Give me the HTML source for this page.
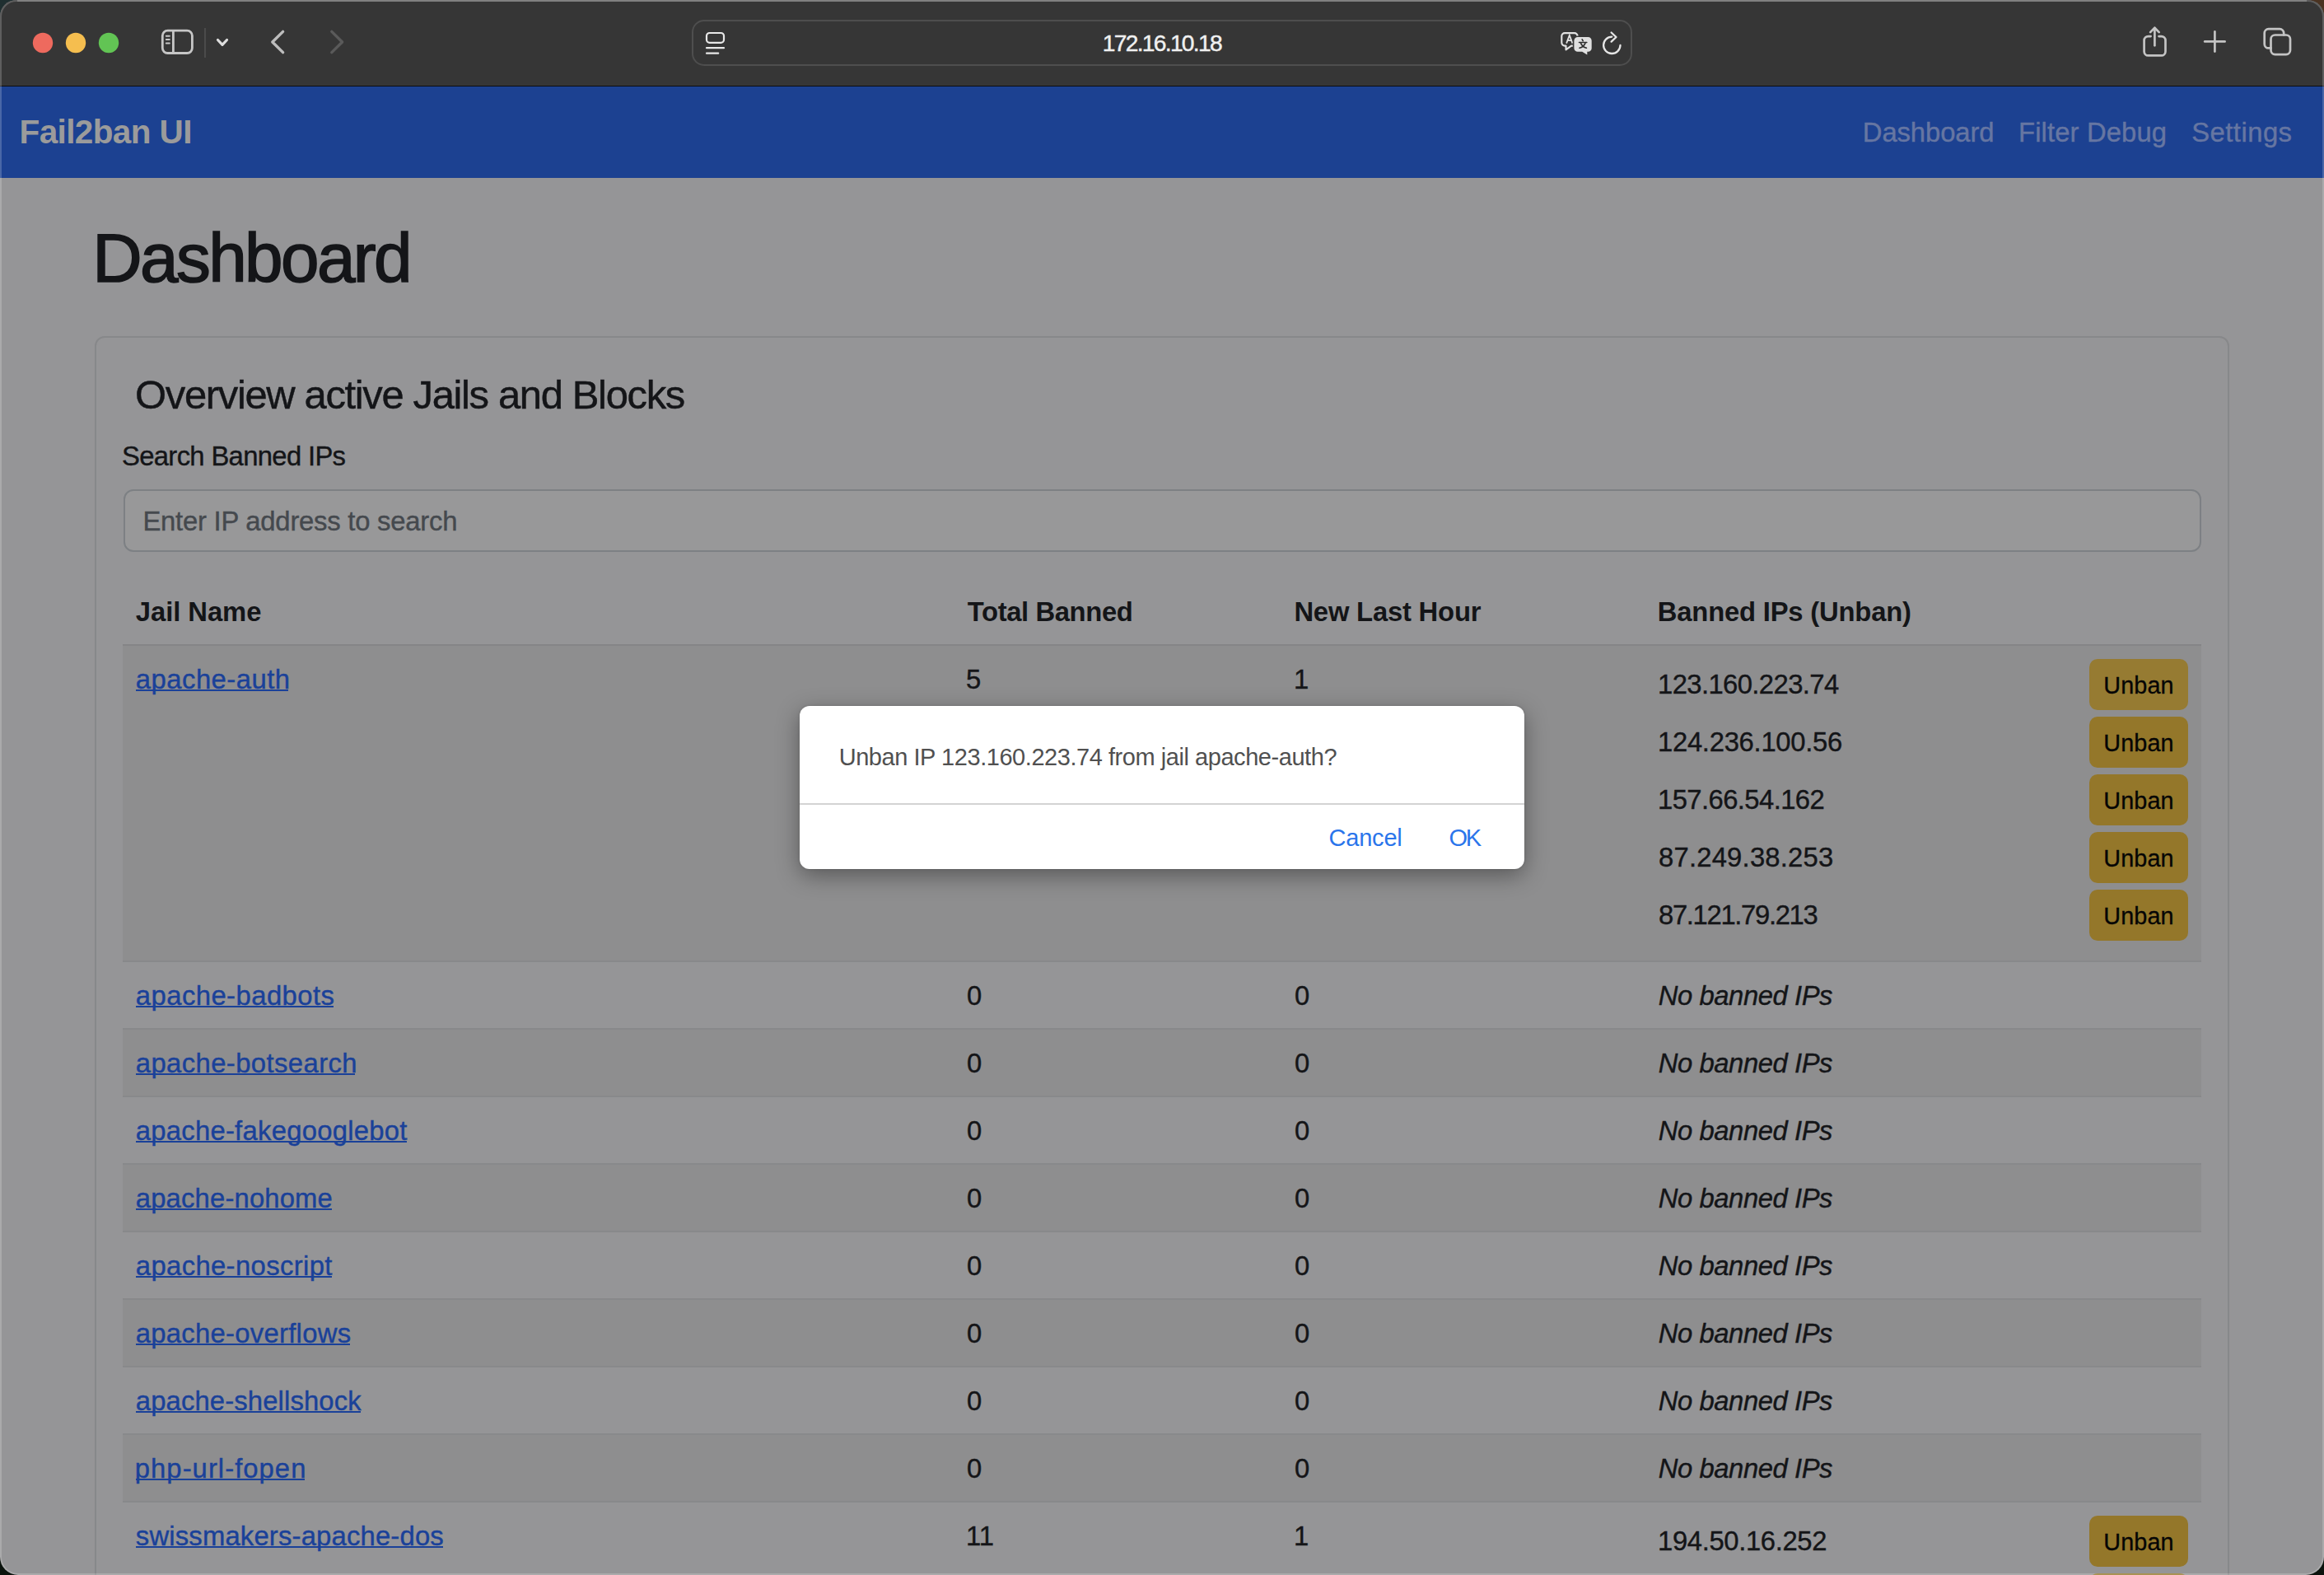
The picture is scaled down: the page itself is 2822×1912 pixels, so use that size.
<!DOCTYPE html>
<html><head><meta charset="utf-8"><title>Fail2ban UI</title>
<style>
html,body{margin:0;padding:0;width:2822px;height:1912px;overflow:hidden;background:#0c140e;font-family:'Liberation Sans',sans-serif}
#bgc{position:absolute;left:0;top:0;width:2822px;height:1912px;background:linear-gradient(180deg,#1f2f30 0px,#1f2f30 60px,#0b130d 1850px,#0b130d 1912px)}
#bgtr{position:absolute;left:2760px;top:0;width:62px;height:62px;background:#4a3322}
#win{position:absolute;left:0;top:0;width:2822px;height:1912px;border-radius:20px 20px 22px 22px;overflow:hidden;background:#959597}
#tb{position:absolute;left:0;top:0;width:2822px;height:104px;background:#363636}
#tbline{position:absolute;left:0;top:104px;width:2822px;height:1px;background:#0d0d0d}
#nav{position:absolute;left:0;top:105px;width:2822px;height:111px;background:#1c4191}
.abs{position:absolute}
.t{position:absolute;white-space:nowrap;font-family:'Liberation Sans',sans-serif}
.ul{position:absolute;height:2px}
#card{position:absolute;left:115px;top:408px;width:2588px;height:1700px;border:2px solid #87888a;border-radius:12px;box-sizing:content-box}
#inp{position:absolute;left:150px;top:594px;width:2519px;height:72px;border:2px solid #7d8084;border-radius:12px;background:#989899}
.row{position:absolute;left:149px;width:2524px}
.dk{background:#8e8e8f}
.bd{position:absolute;left:149px;width:2524px;height:2px;background:#88898b}
.btn{position:absolute;left:2537px;width:120px;height:62px;border-radius:10px;background:#94772a}
#dlg{position:absolute;left:971px;top:857px;width:880px;height:198px;background:#fff;border-radius:12px;box-shadow:0 8px 28px rgba(0,0,0,0.38),0 0 3px rgba(0,0,0,0.15)}
#dsep{position:absolute;left:971px;top:975px;width:880px;height:2px;background:#d3d3d3}
#frame{position:absolute;left:0;top:0;width:2822px;height:1912px;border-radius:20px 20px 22px 22px;box-shadow:inset 0 0 0 2px rgba(255,255,255,0.2);pointer-events:none}
#ftop{position:absolute;left:21px;top:0;width:2780px;height:2px;background:rgba(255,255,255,0.22)}
</style></head>
<body>
<div id="bgc"></div><div id="bgtr"></div>
<div id="win">
  <div id="tb"></div>
  <div id="tbline"></div>
  <svg class="abs" style="left:0;top:0" width="2822" height="104" viewBox="0 0 2822 104">
    <circle cx="52" cy="52" r="12.2" fill="#ee6a5e"/>
    <circle cx="92" cy="52" r="12.2" fill="#f5be4f"/>
    <circle cx="132" cy="52" r="12.2" fill="#62c454"/>
    <g fill="none" stroke="#c6c6c6" stroke-width="2.8" stroke-linecap="round" stroke-linejoin="round">
      <rect x="197.3" y="37.1" width="36.1" height="27.4" rx="6.2"/>
      <line x1="210.4" y1="37.5" x2="210.4" y2="64.5"/>
    </g>
    <g stroke="#c6c6c6" stroke-width="2" stroke-linecap="round">
      <line x1="201.8" y1="43.8" x2="205.8" y2="43.8"/>
      <line x1="201.8" y1="48.1" x2="205.8" y2="48.1"/>
      <line x1="201.8" y1="52.4" x2="205.8" y2="52.4"/>
    </g>
    <rect x="248" y="34" width="2" height="36" fill="#4b4b4b"/>
    <polyline points="264.5,48.5 270,54.3 275.5,48.5" fill="none" stroke="#dedede" stroke-width="3.2" stroke-linecap="round" stroke-linejoin="round"/>
    <polyline points="343.6,38.4 330.8,51 343.6,63.6" fill="none" stroke="#bdbdbd" stroke-width="3.4" stroke-linecap="round" stroke-linejoin="round"/>
    <polyline points="402.8,38.4 415.6,51 402.8,63.6" fill="none" stroke="#5a5a5a" stroke-width="3.4" stroke-linecap="round" stroke-linejoin="round"/>
    <rect x="841" y="25" width="1140" height="54" rx="14" fill="#363636" stroke="#4e4e4e" stroke-width="2"/>
    <g fill="none" stroke="#e8e8e8" stroke-width="2.2" stroke-linecap="round">
      <rect x="858" y="40" width="21" height="11.8" rx="3.6"/>
      <line x1="858" y1="58.2" x2="879" y2="58.2"/>
      <line x1="858" y1="64.7" x2="872.2" y2="64.7"/>
    </g>
    <!-- translate -->
    <g>
      <path d="M1900.1,40.1 H1911.8 A3.8,3.8 0 0 1 1915.6,43.9 V51.8 A3.8,3.8 0 0 1 1911.8,55.6 H1908 L1901.5,60.4 V55.6 H1900.1 A3.8,3.8 0 0 1 1896.3,51.8 V43.9 A3.8,3.8 0 0 1 1900.1,40.1 Z" fill="none" stroke="#e2e2e2" stroke-width="2.1" stroke-linejoin="round"/>
      <path d="M1902.1,52.6 L1905.8,42.9 L1909.5,52.6 M1903.3,49.2 H1908.3" fill="none" stroke="#e2e2e2" stroke-width="1.8"/>
      <path d="M1915.7,45.1 H1928.4 A4.3,4.3 0 0 1 1932.7,49.4 V58.4 A4.3,4.3 0 0 1 1928.4,62.7 H1927.3 V66.6 L1921.2,62.7 H1915.7 A4.3,4.3 0 0 1 1911.4,58.4 V49.4 A4.3,4.3 0 0 1 1915.7,45.1 Z" fill="#363636" stroke="#363636" stroke-width="3.2" stroke-linejoin="round"/>
      <path d="M1915.7,45.1 H1928.4 A4.3,4.3 0 0 1 1932.7,49.4 V58.4 A4.3,4.3 0 0 1 1928.4,62.7 H1927.3 V66.6 L1921.2,62.7 H1915.7 A4.3,4.3 0 0 1 1911.4,58.4 V49.4 A4.3,4.3 0 0 1 1915.7,45.1 Z" fill="#e0e0e0"/>
      <path d="M1921.2,47.8 L1922.2,49.6 M1917.5,51.5 H1926.8 M1919.6,52.6 Q1921.6,57 1926.4,58.3 M1924.9,52.6 Q1922.9,57 1918,58.3" fill="none" stroke="#2e2e2e" stroke-width="1.6" stroke-linecap="round"/>
    </g>
    <!-- reload -->
    <path d="M1967.5,55.0 A10.2,10.2 0 1 1 1957.3,44.6" fill="none" stroke="#e6e6e6" stroke-width="2.3" stroke-linecap="round"/>
    <polyline points="1956.6,39.5 1962.5,45.0 1956.6,50.6" fill="none" stroke="#e6e6e6" stroke-width="2.3" stroke-linecap="round" stroke-linejoin="round"/>
    <!-- share -->
    <g fill="none" stroke="#c4c4c4" stroke-width="2.7" stroke-linecap="round" stroke-linejoin="round">
      <path d="M2611.6,44.1 h-3 a5,5 0 0 0 -5,5 v13.3 a5,5 0 0 0 5,5 h15.9 a5,5 0 0 0 5,-5 v-13.3 a5,5 0 0 0 -5,-5 h-3"/>
      <line x1="2616.4" y1="34" x2="2616.4" y2="55.3"/>
      <polyline points="2611.1,39.1 2616.4,33.8 2621.7,39.1"/>
      <line x1="2677.2" y1="50.4" x2="2701.6" y2="50.4"/>
      <line x1="2689.4" y1="38.4" x2="2689.4" y2="62.6"/>
      <path d="M2757.5,58.4 h-2.8 a5,5 0 0 1 -5,-5 v-13.2 a5,5 0 0 1 5,-5 h13.5 a5,5 0 0 1 5,5 v2.3"/>
      <rect x="2757.5" y="42.5" width="23.5" height="23.6" rx="5"/>
    </g>
  </svg>
  <div id="nav"></div>
  <div id="card"></div>
  <div id="inp"></div>
  <div class="bd" style="top:782px;background:#858587"></div>
  <div class="row dk" style="top:784px;height:382px"></div>
  <div class="bd" style="top:1166px"></div>
  <div class="bd" style="top:1248px"></div>
  <div class="row dk" style="top:1250px;height:80px"></div>
  <div class="bd" style="top:1330px"></div>
  <div class="bd" style="top:1412px"></div>
  <div class="row dk" style="top:1414px;height:80px"></div>
  <div class="bd" style="top:1494px"></div>
  <div class="bd" style="top:1576px"></div>
  <div class="row dk" style="top:1578px;height:80px"></div>
  <div class="bd" style="top:1658px"></div>
  <div class="bd" style="top:1740px"></div>
  <div class="row dk" style="top:1742px;height:80px"></div>
  <div class="bd" style="top:1822px"></div>
  <div class="btn" style="top:800px;background:#967b32"></div>
  <div class="btn" style="top:870px"></div>
  <div class="btn" style="top:940px"></div>
  <div class="btn" style="top:1010px"></div>
  <div class="btn" style="top:1080px"></div>
  <div class="btn" style="top:1840px"></div>
  <div class="btn" style="top:1910px"></div>
  <div id="dlg"></div>
  <div id="dsep"></div>
<span class="t" style="left:1338.80px;top:38.12px;font-size:28.2px;line-height:28.2px;color:#f0f0f0;letter-spacing:-1.709px;-webkit-text-stroke:0.45px #f0f0f0">172.16.10.18</span>
<span class="t" style="left:23.50px;top:139.91px;font-size:40.5px;line-height:40.5px;color:#9b9b9b;letter-spacing:-0.610px;font-weight:bold">Fail2ban UI</span>
<span class="t" style="left:2261.80px;top:145.33px;font-size:32.8px;line-height:32.8px;color:#6676a2;letter-spacing:-0.088px;-webkit-text-stroke:0.4px #6676a2">Dashboard</span>
<span class="t" style="left:2451.00px;top:145.33px;font-size:32.8px;line-height:32.8px;color:#6676a2;letter-spacing:0.127px;-webkit-text-stroke:0.4px #6676a2">Filter Debug</span>
<span class="t" style="left:2661.20px;top:145.33px;font-size:32.8px;line-height:32.8px;color:#6676a2;letter-spacing:0.471px;-webkit-text-stroke:0.4px #6676a2">Settings</span>
<span class="t" style="left:112.30px;top:271.93px;font-size:83.7px;line-height:83.7px;color:#141518;letter-spacing:-2.638px;-webkit-text-stroke:1.6px #141518">Dashboard</span>
<span class="t" style="left:164.10px;top:454.51px;font-size:49px;line-height:49px;color:#141518;letter-spacing:-1.374px;-webkit-text-stroke:0.45px #141518">Overview active Jails and Blocks</span>
<span class="t" style="left:148.00px;top:538.43px;font-size:32.8px;line-height:32.8px;color:#141518;letter-spacing:-0.663px;-webkit-text-stroke:0.4px #141518">Search Banned IPs</span>
<span class="t" style="left:173.40px;top:616.93px;font-size:32.8px;line-height:32.8px;color:#45494e;letter-spacing:-0.228px;-webkit-text-stroke:0.4px #45494e">Enter IP address to search</span>
<span class="t" style="left:164.80px;top:726.73px;font-size:32.8px;line-height:32.8px;color:#141518;letter-spacing:-0.062px;font-weight:bold">Jail Name</span>
<span class="t" style="left:1174.80px;top:726.73px;font-size:32.8px;line-height:32.8px;color:#141518;letter-spacing:-0.391px;font-weight:bold">Total Banned</span>
<span class="t" style="left:1571.40px;top:726.73px;font-size:32.8px;line-height:32.8px;color:#141518;letter-spacing:-0.208px;font-weight:bold">New Last Hour</span>
<span class="t" style="left:2012.80px;top:726.73px;font-size:32.8px;line-height:32.8px;color:#141518;letter-spacing:-0.200px;font-weight:bold">Banned IPs (Unban)</span>
<div class="ul" style="left:165.3px;top:837.3px;width:184.9px;background:#1a4199"></div>
<span class="t" style="left:164.80px;top:808.73px;font-size:32.8px;line-height:32.8px;color:#1a4199;letter-spacing:0.490px;-webkit-text-stroke:0.4px #1a4199">apache-auth</span>
<span class="t" style="left:1173.00px;top:808.73px;font-size:32.8px;line-height:32.8px;color:#141518;letter-spacing:0.000px;-webkit-text-stroke:0.4px #141518">5</span>
<span class="t" style="left:1571.00px;top:808.73px;font-size:32.8px;line-height:32.8px;color:#141518;letter-spacing:0.000px;-webkit-text-stroke:0.4px #141518">1</span>
<div class="ul" style="left:165.3px;top:1221.3px;width:239.9px;background:#1a4199"></div>
<span class="t" style="left:164.80px;top:1192.73px;font-size:32.8px;line-height:32.8px;color:#1a4199;letter-spacing:0.454px;-webkit-text-stroke:0.4px #1a4199">apache-badbots</span>
<span class="t" style="left:1174.00px;top:1192.73px;font-size:32.8px;line-height:32.8px;color:#141518;letter-spacing:0.000px;-webkit-text-stroke:0.4px #141518">0</span>
<span class="t" style="left:1572.00px;top:1192.73px;font-size:32.8px;line-height:32.8px;color:#141518;letter-spacing:0.000px;-webkit-text-stroke:0.4px #141518">0</span>
<span class="t" style="left:2013.80px;top:1192.73px;font-size:32.8px;line-height:32.8px;color:#141518;letter-spacing:-0.442px;font-style:italic;-webkit-text-stroke:0.4px #141518">No banned IPs</span>
<div class="ul" style="left:165.3px;top:1303.3px;width:266.2px;background:#1a4199"></div>
<span class="t" style="left:164.80px;top:1274.73px;font-size:32.8px;line-height:32.8px;color:#1a4199;letter-spacing:0.413px;-webkit-text-stroke:0.4px #1a4199">apache-botsearch</span>
<span class="t" style="left:1174.00px;top:1274.73px;font-size:32.8px;line-height:32.8px;color:#141518;letter-spacing:0.000px;-webkit-text-stroke:0.4px #141518">0</span>
<span class="t" style="left:1572.00px;top:1274.73px;font-size:32.8px;line-height:32.8px;color:#141518;letter-spacing:0.000px;-webkit-text-stroke:0.4px #141518">0</span>
<span class="t" style="left:2013.80px;top:1274.73px;font-size:32.8px;line-height:32.8px;color:#141518;letter-spacing:-0.442px;font-style:italic;-webkit-text-stroke:0.4px #141518">No banned IPs</span>
<div class="ul" style="left:165.3px;top:1385.3px;width:328.9px;background:#1a4199"></div>
<span class="t" style="left:164.80px;top:1356.73px;font-size:32.8px;line-height:32.8px;color:#1a4199;letter-spacing:0.258px;-webkit-text-stroke:0.4px #1a4199">apache-fakegooglebot</span>
<span class="t" style="left:1174.00px;top:1356.73px;font-size:32.8px;line-height:32.8px;color:#141518;letter-spacing:0.000px;-webkit-text-stroke:0.4px #141518">0</span>
<span class="t" style="left:1572.00px;top:1356.73px;font-size:32.8px;line-height:32.8px;color:#141518;letter-spacing:0.000px;-webkit-text-stroke:0.4px #141518">0</span>
<span class="t" style="left:2013.80px;top:1356.73px;font-size:32.8px;line-height:32.8px;color:#141518;letter-spacing:-0.442px;font-style:italic;-webkit-text-stroke:0.4px #141518">No banned IPs</span>
<div class="ul" style="left:165.3px;top:1467.3px;width:238.0px;background:#1a4199"></div>
<span class="t" style="left:164.80px;top:1438.73px;font-size:32.8px;line-height:32.8px;color:#1a4199;letter-spacing:0.167px;-webkit-text-stroke:0.4px #1a4199">apache-nohome</span>
<span class="t" style="left:1174.00px;top:1438.73px;font-size:32.8px;line-height:32.8px;color:#141518;letter-spacing:0.000px;-webkit-text-stroke:0.4px #141518">0</span>
<span class="t" style="left:1572.00px;top:1438.73px;font-size:32.8px;line-height:32.8px;color:#141518;letter-spacing:0.000px;-webkit-text-stroke:0.4px #141518">0</span>
<span class="t" style="left:2013.80px;top:1438.73px;font-size:32.8px;line-height:32.8px;color:#141518;letter-spacing:-0.442px;font-style:italic;-webkit-text-stroke:0.4px #141518">No banned IPs</span>
<div class="ul" style="left:165.3px;top:1549.3px;width:238.2px;background:#1a4199"></div>
<span class="t" style="left:164.80px;top:1520.73px;font-size:32.8px;line-height:32.8px;color:#1a4199;letter-spacing:0.371px;-webkit-text-stroke:0.4px #1a4199">apache-noscript</span>
<span class="t" style="left:1174.00px;top:1520.73px;font-size:32.8px;line-height:32.8px;color:#141518;letter-spacing:0.000px;-webkit-text-stroke:0.4px #141518">0</span>
<span class="t" style="left:1572.00px;top:1520.73px;font-size:32.8px;line-height:32.8px;color:#141518;letter-spacing:0.000px;-webkit-text-stroke:0.4px #141518">0</span>
<span class="t" style="left:2013.80px;top:1520.73px;font-size:32.8px;line-height:32.8px;color:#141518;letter-spacing:-0.442px;font-style:italic;-webkit-text-stroke:0.4px #141518">No banned IPs</span>
<div class="ul" style="left:165.3px;top:1631.3px;width:260.2px;background:#1a4199"></div>
<span class="t" style="left:164.80px;top:1602.73px;font-size:32.8px;line-height:32.8px;color:#1a4199;letter-spacing:0.280px;-webkit-text-stroke:0.4px #1a4199">apache-overflows</span>
<span class="t" style="left:1174.00px;top:1602.73px;font-size:32.8px;line-height:32.8px;color:#141518;letter-spacing:0.000px;-webkit-text-stroke:0.4px #141518">0</span>
<span class="t" style="left:1572.00px;top:1602.73px;font-size:32.8px;line-height:32.8px;color:#141518;letter-spacing:0.000px;-webkit-text-stroke:0.4px #141518">0</span>
<span class="t" style="left:2013.80px;top:1602.73px;font-size:32.8px;line-height:32.8px;color:#141518;letter-spacing:-0.442px;font-style:italic;-webkit-text-stroke:0.4px #141518">No banned IPs</span>
<div class="ul" style="left:165.3px;top:1713.3px;width:273.2px;background:#1a4199"></div>
<span class="t" style="left:164.80px;top:1684.73px;font-size:32.8px;line-height:32.8px;color:#1a4199;letter-spacing:0.137px;-webkit-text-stroke:0.4px #1a4199">apache-shellshock</span>
<span class="t" style="left:1174.00px;top:1684.73px;font-size:32.8px;line-height:32.8px;color:#141518;letter-spacing:0.000px;-webkit-text-stroke:0.4px #141518">0</span>
<span class="t" style="left:1572.00px;top:1684.73px;font-size:32.8px;line-height:32.8px;color:#141518;letter-spacing:0.000px;-webkit-text-stroke:0.4px #141518">0</span>
<span class="t" style="left:2013.80px;top:1684.73px;font-size:32.8px;line-height:32.8px;color:#141518;letter-spacing:-0.442px;font-style:italic;-webkit-text-stroke:0.4px #141518">No banned IPs</span>
<div class="ul" style="left:165.3px;top:1795.3px;width:204.5px;background:#1a4199"></div>
<span class="t" style="left:163.80px;top:1766.73px;font-size:32.8px;line-height:32.8px;color:#1a4199;letter-spacing:1.042px;-webkit-text-stroke:0.4px #1a4199">php-url-fopen</span>
<span class="t" style="left:1174.00px;top:1766.73px;font-size:32.8px;line-height:32.8px;color:#141518;letter-spacing:0.000px;-webkit-text-stroke:0.4px #141518">0</span>
<span class="t" style="left:1572.00px;top:1766.73px;font-size:32.8px;line-height:32.8px;color:#141518;letter-spacing:0.000px;-webkit-text-stroke:0.4px #141518">0</span>
<span class="t" style="left:2013.80px;top:1766.73px;font-size:32.8px;line-height:32.8px;color:#141518;letter-spacing:-0.442px;font-style:italic;-webkit-text-stroke:0.4px #141518">No banned IPs</span>
<div class="ul" style="left:165.3px;top:1877.3px;width:372.9px;background:#1a4199"></div>
<span class="t" style="left:164.80px;top:1848.73px;font-size:32.8px;line-height:32.8px;color:#1a4199;letter-spacing:0.186px;-webkit-text-stroke:0.4px #1a4199">swissmakers-apache-dos</span>
<span class="t" style="left:1173.00px;top:1848.73px;font-size:32.8px;line-height:32.8px;color:#141518;letter-spacing:0.000px;-webkit-text-stroke:0.4px #141518">11</span>
<span class="t" style="left:1571.00px;top:1848.73px;font-size:32.8px;line-height:32.8px;color:#141518;letter-spacing:0.000px;-webkit-text-stroke:0.4px #141518">1</span>
<span class="t" style="left:2013.00px;top:814.93px;font-size:32.8px;line-height:32.8px;color:#141518;letter-spacing:-0.600px;-webkit-text-stroke:0.4px #141518">123.160.223.74</span>
<span class="t" style="left:2013.00px;top:884.93px;font-size:32.8px;line-height:32.8px;color:#141518;letter-spacing:-0.285px;-webkit-text-stroke:0.4px #141518">124.236.100.56</span>
<span class="t" style="left:2013.00px;top:954.93px;font-size:32.8px;line-height:32.8px;color:#141518;letter-spacing:-0.583px;-webkit-text-stroke:0.4px #141518">157.66.54.162</span>
<span class="t" style="left:2014.00px;top:1024.93px;font-size:32.8px;line-height:32.8px;color:#141518;letter-spacing:0.208px;-webkit-text-stroke:0.4px #141518">87.249.38.253</span>
<span class="t" style="left:2014.00px;top:1094.93px;font-size:32.8px;line-height:32.8px;color:#141518;letter-spacing:-1.333px;-webkit-text-stroke:0.4px #141518">87.121.79.213</span>
<span class="t" style="left:2013.00px;top:1854.93px;font-size:32.8px;line-height:32.8px;color:#141518;letter-spacing:-0.358px;-webkit-text-stroke:0.4px #141518">194.50.16.252</span>
<span class="t" style="left:2554.30px;top:818.32px;font-size:28.8px;line-height:28.8px;color:#050505;letter-spacing:0.100px;-webkit-text-stroke:0.3px #050505">Unban</span>
<span class="t" style="left:2554.30px;top:888.32px;font-size:28.8px;line-height:28.8px;color:#050505;letter-spacing:0.100px;-webkit-text-stroke:0.3px #050505">Unban</span>
<span class="t" style="left:2554.30px;top:958.32px;font-size:28.8px;line-height:28.8px;color:#050505;letter-spacing:0.100px;-webkit-text-stroke:0.3px #050505">Unban</span>
<span class="t" style="left:2554.30px;top:1028.32px;font-size:28.8px;line-height:28.8px;color:#050505;letter-spacing:0.100px;-webkit-text-stroke:0.3px #050505">Unban</span>
<span class="t" style="left:2554.30px;top:1098.32px;font-size:28.8px;line-height:28.8px;color:#050505;letter-spacing:0.100px;-webkit-text-stroke:0.3px #050505">Unban</span>
<span class="t" style="left:2554.30px;top:1858.32px;font-size:28.8px;line-height:28.8px;color:#050505;letter-spacing:0.100px;-webkit-text-stroke:0.3px #050505">Unban</span>
<span class="t" style="left:2554.30px;top:1928.32px;font-size:28.8px;line-height:28.8px;color:#050505;letter-spacing:0.100px;-webkit-text-stroke:0.3px #050505">Unban</span>
<span class="t" style="left:1018.70px;top:904.95px;font-size:29px;line-height:29px;color:#505050;letter-spacing:-0.449px">Unban IP 123.160.223.74 from jail apache-auth?</span>
<span class="t" style="left:1613.50px;top:1003.25px;font-size:29px;line-height:29px;color:#2a75eb;letter-spacing:-0.200px">Cancel</span>
<span class="t" style="left:1759.50px;top:1003.25px;font-size:29px;line-height:29px;color:#2a75eb;letter-spacing:-2.400px">OK</span>
  <div id="frame"></div><div id="ftop"></div>
</div>
</body></html>
